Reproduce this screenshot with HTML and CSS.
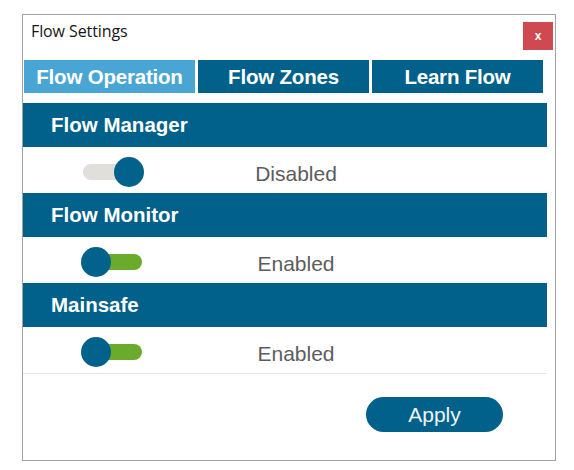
FILE: index.html
```html
<!DOCTYPE html>
<html>
<head>
<meta charset="utf-8">
<link rel="stylesheet" href="styles.css">
</head>
<body>
<div class="dialog">
  <div class="titlebar">
    <span class="title">Flow Settings</span>
    <button class="close">x</button>
  </div>
  <div class="tabs">
    <div class="tab active">Flow Operation</div>
    <div class="tab">Flow Zones</div>
    <div class="tab">Learn Flow</div>
  </div>
  <div class="sections">
    <div class="section-head">Flow Manager</div>
    <div class="row">
      <div class="toggle-cell"><span class="toggle off"><span class="knob"></span></span></div>
      <div class="status">Disabled</div>
    </div>
    <div class="section-head">Flow Monitor</div>
    <div class="row">
      <div class="toggle-cell"><span class="toggle on"><span class="knob"></span></span></div>
      <div class="status">Enabled</div>
    </div>
    <div class="section-head">Mainsafe</div>
    <div class="row">
      <div class="toggle-cell"><span class="toggle on"><span class="knob"></span></span></div>
      <div class="status">Enabled</div>
    </div>
    <div class="divider"></div>
  </div>
  <div class="footer">
    <button class="apply">Apply</button>
  </div>
</div>
</body>
</html>
```
FILE: styles.css
```css
html, body {
  margin: 0;
  padding: 0;
  background: #ffffff;
}

.dialog {
  box-sizing: border-box;
  margin: 14px 0 0 22px;
  width: 534px;
  height: 447px;
  border: 1px solid #a3a3a3;
  background: #fff;
  font-family: "Liberation Sans", Arial, sans-serif;
}

.titlebar {
  display: flex;
  justify-content: space-between;
  align-items: flex-start;
  height: 45px;
}

.title {
  font-family: "Open Sans", "Noto Sans", sans-serif;
  font-size: 16px;
  letter-spacing: -0.1px;
  color: #161616;
  padding: 5px 0 0 8px;
}

.close {
  margin: 7px 2px 0 0;
  width: 30px;
  height: 28px;
  border: none;
  padding: 0;
  background: #cf4a50;
  color: #fff;
  font-family: "Liberation Sans", Arial, sans-serif;
  font-weight: bold;
  font-size: 12px;
}

.tabs {
  display: flex;
  gap: 3px;
  margin: 0 12px 0 1px;
  height: 33px;
}

.tab {
  flex: 1;
  display: flex;
  align-items: center;
  justify-content: center;
  background: #02618a;
  color: #fff;
  font-weight: bold;
  font-size: 20.5px;
  letter-spacing: -0.2px;
}

.tab.active {
  background: #49a6d4;
}

.sections {
  margin: 10px 8px 0 0;
}

.section-head {
  box-sizing: border-box;
  height: 44px;
  display: flex;
  align-items: center;
  padding-left: 28px;
  background: #02618a;
  color: #fff;
  font-weight: bold;
  font-size: 20.5px;
}

.row {
  box-sizing: border-box;
  height: 46px;
  padding-top: 4px;
  display: grid;
  grid-template-columns: 200px 146px;
  align-items: center;
}

.toggle-cell {
  padding-left: 58px;
  display: flex;
}

.toggle {
  position: relative;
  display: block;
  width: 63px;
  height: 30px;
}

.toggle::before {
  content: "";
  position: absolute;
  left: 2px;
  right: 2px;
  top: 7px;
  height: 16px;
  border-radius: 8px;
  background: #e0dfdc;
}

.toggle.on::before {
  background: #6aab2b;
}

.knob {
  position: absolute;
  top: 0;
  width: 30px;
  height: 30px;
  border-radius: 50%;
  background: #03628c;
}

.toggle.off .knob {
  right: 0;
}

.toggle.on .knob {
  left: 0;
}

.status {
  text-align: center;
  font-size: 21px;
  color: #5d5d5d;
  padding-top: 3px;
}

.divider {
  border-top: 1px solid #e6e6e6;
}

.footer {
  display: flex;
  justify-content: flex-end;
  padding: 23px 52px 0 0;
}

.apply {
  width: 137px;
  height: 35px;
  border: none;
  border-radius: 18px;
  background: #02618a;
  color: #eef3f6;
  font-family: "Liberation Sans", Arial, sans-serif;
  font-size: 21px;
  padding: 0;
}
```
